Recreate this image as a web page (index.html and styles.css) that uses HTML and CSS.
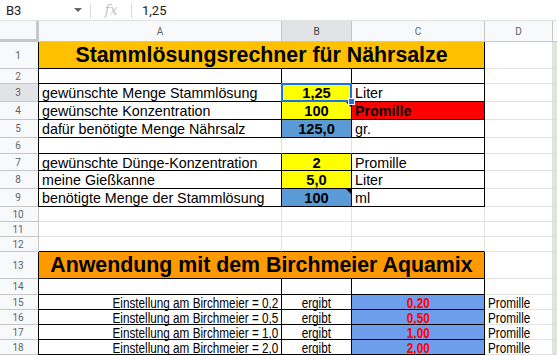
FILE: index.html
```html
<!DOCTYPE html>
<html>
<head>
<meta charset="utf-8">
<link rel="stylesheet" href="styles.css">
</head>
<body>
<div class="fbar">
  <div class="namebox"><span class="ref">B3</span><span class="caret"></span></div>
  <div class="sep"></div>
  <div class="fx">fx</div>
  <div class="sep"></div>
  <div class="fval">1,25</div>
</div>
<div class="sheet">
  <!-- header row -->
  <div class="corner"></div>
  <div class="ch">A</div>
  <div class="ch sel">B</div>
  <div class="ch">C</div>
  <div class="ch">D</div>
  <div class="ch e"></div>

  <!-- row 1 -->
  <div class="rh">1</div>
  <div class="c title1 bl bb br span3">Stammlösungsrechner für Nährsalze</div>
  <div class="c"></div>
  <div class="c e"></div>

  <!-- row 2 -->
  <div class="rh">2</div>
  <div class="c bl bb br"></div>
  <div class="c bb br"></div>
  <div class="c bb br"></div>
  <div class="c"></div>
  <div class="c e"></div>

  <!-- row 3 -->
  <div class="rh sel">3</div>
  <div class="c bl bb br txt">gewünschte Menge Stammlösung</div>
  <div class="c bb br val yellow selcell">1,25<span class="selbox"></span><span class="handle"></span></div>
  <div class="c bb br txt">Liter</div>
  <div class="c"></div>
  <div class="c e"></div>

  <!-- row 4 -->
  <div class="rh">4</div>
  <div class="c bl bb br txt">gewünschte Konzentration</div>
  <div class="c bb br val yellow note">100</div>
  <div class="c bb br txt red b">Promille</div>
  <div class="c"></div>
  <div class="c e"></div>

  <!-- row 5 -->
  <div class="rh">5</div>
  <div class="c bl bb br txt">dafür benötigte Menge Nährsalz</div>
  <div class="c bb br val blue">125,0</div>
  <div class="c bb br txt">gr.</div>
  <div class="c"></div>
  <div class="c e"></div>

  <!-- row 6 -->
  <div class="rh">6</div>
  <div class="c bl bb"></div>
  <div class="c bb"></div>
  <div class="c bb br"></div>
  <div class="c"></div>
  <div class="c e"></div>

  <!-- row 7 -->
  <div class="rh">7</div>
  <div class="c bl bb br txt">gewünschte Dünge-Konzentration</div>
  <div class="c bb br val yellow">2</div>
  <div class="c bb br txt">Promille</div>
  <div class="c"></div>
  <div class="c e"></div>

  <!-- row 8 -->
  <div class="rh">8</div>
  <div class="c bl bb br txt">meine Gießkanne</div>
  <div class="c bb br val yellow">5,0</div>
  <div class="c bb br txt">Liter</div>
  <div class="c"></div>
  <div class="c e"></div>

  <!-- row 9 -->
  <div class="rh">9</div>
  <div class="c bl bb br txt">benötigte Menge der Stammlösung</div>
  <div class="c bb br val blue note">100</div>
  <div class="c bb br txt">ml</div>
  <div class="c"></div>
  <div class="c e"></div>

  <!-- row 10 -->
  <div class="rh">10</div>
  <div class="c"></div><div class="c"></div><div class="c"></div><div class="c"></div><div class="c e"></div>
  <!-- row 11 -->
  <div class="rh">11</div>
  <div class="c"></div><div class="c"></div><div class="c"></div><div class="c"></div><div class="c e"></div>
  <!-- row 12 -->
  <div class="rh">12</div>
  <div class="c bb"></div><div class="c bb"></div><div class="c bb"></div><div class="c"></div><div class="c e"></div>

  <!-- row 13 -->
  <div class="rh">13</div>
  <div class="c title2 bl bb br span3">Anwendung mit dem Birchmeier Aquamix</div>
  <div class="c"></div>
  <div class="c e"></div>

  <!-- row 14 -->
  <div class="rh">14</div>
  <div class="c bl bb br"></div>
  <div class="c bb br"></div>
  <div class="c bb br"></div>
  <div class="c"></div>
  <div class="c e"></div>

  <!-- rows 15-18 -->
  <div class="rh">15</div>
  <div class="c bl bb br nar right"><span class="sq sr">Einstellung am Birchmeier = 0,2</span></div>
  <div class="c bb br nar center"><span class="sq">ergibt</span></div>
  <div class="c bb br nar center res"><span class="sq">0,20</span></div>
  <div class="c nar dtxt"><span class="sq sl">Promille</span></div>
  <div class="c e"></div>

  <div class="rh">16</div>
  <div class="c bl bb br nar right"><span class="sq sr">Einstellung am Birchmeier = 0,5</span></div>
  <div class="c bb br nar center"><span class="sq">ergibt</span></div>
  <div class="c bb br nar center res"><span class="sq">0,50</span></div>
  <div class="c nar dtxt"><span class="sq sl">Promille</span></div>
  <div class="c e"></div>

  <div class="rh">17</div>
  <div class="c bl bb br nar right"><span class="sq sr">Einstellung am Birchmeier = 1,0</span></div>
  <div class="c bb br nar center"><span class="sq">ergibt</span></div>
  <div class="c bb br nar center res"><span class="sq">1,00</span></div>
  <div class="c nar dtxt"><span class="sq sl">Promille</span></div>
  <div class="c e"></div>

  <div class="rh">18</div>
  <div class="c bl bb br nar right"><span class="sq sr">Einstellung am Birchmeier = 2,0</span></div>
  <div class="c bb br nar center"><span class="sq">ergibt</span></div>
  <div class="c bb br nar center res"><span class="sq">2,00</span></div>
  <div class="c nar dtxt"><span class="sq sl">Promille</span></div>
  <div class="c e"></div>
</div>
</body>
</html>
```
FILE: styles.css
```css
* { box-sizing: border-box; }
html, body { margin: 0; padding: 0; background: #fff; overflow: hidden; }
body { width: 557px; height: 355px; font-family: "Liberation Sans", Arial, sans-serif; }

.fbar {
  height: 21px;
  display: flex;
  align-items: center;
  border-bottom: 1px solid #e1e1e1;
  font-family: Roboto, "Liberation Sans", sans-serif;
  font-size: 13px;
  color: #202124;
}
.namebox { width: 90px; display: flex; align-items: center; justify-content: space-between; padding: 0 6px 0 6px; }
.ref { letter-spacing: -0.2px; }
.caret { width: 0; height: 0; border-left: 4px solid transparent; border-right: 4px solid transparent; border-top: 4px solid #666; margin-right: 2px; }
.sep { width: 1px; height: 15px; background: #dadce0; }
.fx { width: 40px; text-align: center; color: #c4c4c4; font-family: "DejaVu Serif", serif; font-style: italic; font-size: 14px; }
.fval { padding-left: 10px; }

.sheet {
  display: grid;
  grid-template-columns: 39px 243px 70px 133px 68px 1fr;
  grid-template-rows: 21px 27px 15px 18px 18px 18px 16px 17px 18px 18px 15px 15px 15px 27px 16px 15px 15px 15px 15px;
}

.corner { background: #f8f9fa; border-right: 3px solid #c7c7c7; border-bottom: 3px solid #c7c7c7; }
.ch {
  background: #f8f9fa;
  border-right: 1px solid #c7c7c7;
  border-bottom: 1px solid #c7c7c7;
  font-family: Roboto, "Liberation Sans", sans-serif;
  font-size: 10px;
  color: #5f6368;
  display: flex; align-items: center; justify-content: center;
}
.ch.sel { background: #e1e3e6; color: #444; }
.ch.e { border-right: none; }
.rh {
  background: #f8f9fa;
  border-right: 1px solid #c7c7c7;
  border-bottom: 1px solid #c7c7c7;
  font-family: Roboto, "Liberation Sans", sans-serif;
  font-size: 10px;
  color: #5f6368;
  display: flex; align-items: center; justify-content: center;
  padding-right: 2px;
}
.rh.sel { background: #e1e3e6; }

.c {
  position: relative;
  border-right: 1px solid #e2e2e2;
  border-bottom: 1px solid #e2e2e2;
  display: flex; align-items: center;
  white-space: nowrap;
  overflow: visible;
  color: #000;
}
.c.e { background: #d9ead3; border-right: none; border-bottom-color: #d0e0c9; }
.bl { box-shadow: -1px 0 0 #000; }
.bb { border-bottom-color: #000; }
.br { border-right-color: #000; }
.span3 { grid-column: span 3; }

.title1, .title2 {
  justify-content: center;
  font-weight: bold;
  font-size: 21.33px;
  padding-top: 1px;
}
.title1 { background: #ffc000; }
.title2 { background: #ff9900; }

.txt { font-size: 14.3px; padding-left: 3px; padding-top: 1px; }
.val { justify-content: center; font-weight: bold; font-size: 14.67px; padding-top: 1px; }
.yellow { background: #ffff00; }
.blue { background: #5b9bd5; }
.red { background: #ff0000; }
.b { font-weight: bold; }

.nar {
  font-family: "Liberation Sans", Arial, sans-serif;
  font-size: 14.67px;
  padding-top: 2px;
  line-height: 1;
}
.sq { display: inline-block; transform: scaleX(0.8); transform-origin: center; }
.sq.sr { transform-origin: right center; }
.sq.sl { transform-origin: left center; }
.right { justify-content: flex-end; padding-right: 3px; }
.center { justify-content: center; }
.res { background: #6d9eeb; color: #ff0000; font-weight: bold; }
.dtxt { padding-left: 3px; }

.selbox {
  position: absolute;
  left: -1px; top: -1px; right: -1px; bottom: -1px;
  border: 2px solid #1a73e8;
  pointer-events: none;
}
.handle {
  position: absolute;
  right: -4px; bottom: -4px;
  width: 7px; height: 7px;
  background: #1a73e8;
  border: 1px solid #fff;
  z-index: 2;
}
.note::after {
  content: "";
  position: absolute;
  top: 0; right: 0;
  width: 0; height: 0;
  border-top: 5px solid #000;
  border-left: 5px solid transparent;
}
```
